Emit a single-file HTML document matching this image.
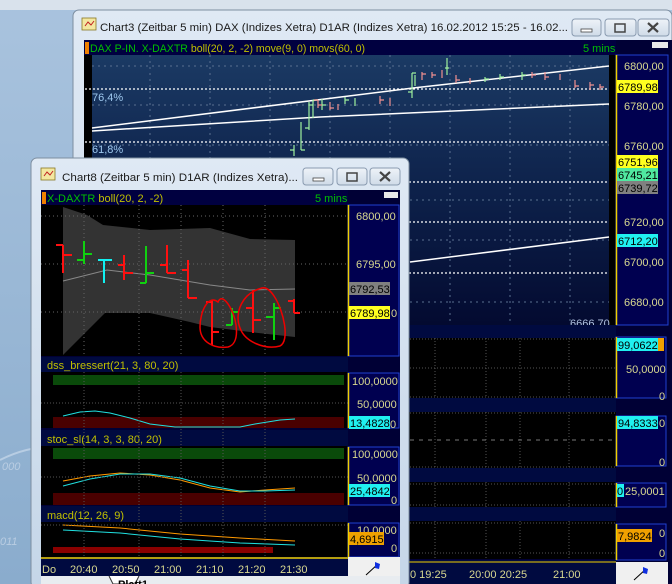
<!DOCTYPE html>
<html><head><meta charset="utf-8"><style>
html,body{margin:0;padding:0;width:672px;height:584px;overflow:hidden;background:#9db9d8}
svg{display:block}
text{font-family:"Liberation Sans",sans-serif;font-size:11px}
</style></head><body>
<svg width="672" height="584" viewBox="0 0 672 584" xmlns="http://www.w3.org/2000/svg">
<defs>
<linearGradient id="desk" x1="0" y1="0" x2="0" y2="1">
<stop offset="0" stop-color="#a9c3de"/><stop offset="1" stop-color="#8aaccd"/></linearGradient>
<linearGradient id="title" x1="0" y1="0" x2="0" y2="1">
<stop offset="0" stop-color="#dfe9f4"/><stop offset="1" stop-color="#c5d6e8"/></linearGradient>
<linearGradient id="plot3" x1="0" y1="0" x2="0" y2="1">
<stop offset="0" stop-color="#1b3a64"/><stop offset="0.55" stop-color="#0c1f48"/><stop offset="1" stop-color="#030a30"/></linearGradient>
<linearGradient id="btn" x1="0" y1="0" x2="0" y2="1">
<stop offset="0" stop-color="#eef3f8"/><stop offset="1" stop-color="#cfdbe8"/></linearGradient>
</defs>
<rect width="672" height="584" fill="url(#desk)"/>
<rect width="672" height="10" fill="#d9e2ec"/>
<path d="M0 460 Q40 440 80 450" stroke="#b8cde3" stroke-width="2" fill="none"/>
<text x="2" y="470" fill="#b9cde2" font-size="26" font-style="italic">000</text>
<text x="0" y="545" fill="#b9cde2" font-size="22" font-style="italic">011</text>

<!-- Chart3 window -->
<rect x="73" y="10" width="599" height="574" rx="6" fill="url(#title)" stroke="#7d8ea0"/>
<rect x="82" y="18" width="14" height="12" fill="#f3e7a0" stroke="#887722" stroke-width="0.8"/>
<path d="M85 26 l3 -4 3 3 3 -4" stroke="#c02020" fill="none"/>
<text x="100" y="31" fill="#1a1a1a" font-size="12" textLength="468" lengthAdjust="spacingAndGlyphs">Chart3 (Zeitbar 5 min)  DAX (Indizes Xetra) D1AR (Indizes Xetra) 16.02.2012 15:25 - 16.02...</text>
<g stroke="#8a9bb0" fill="url(#btn)">
<rect x="572" y="19" width="29" height="17" rx="3"/><rect x="605" y="19" width="31" height="17" rx="3"/><rect x="638" y="19" width="31" height="17" rx="3"/></g>
<rect x="581" y="29" width="11" height="3" fill="#fff" stroke="#444" stroke-width="0.8"/>
<rect x="615" y="24" width="10" height="8" fill="none" stroke="#444" stroke-width="1.5"/>
<path d="M648 23 l10 9 M658 23 l-10 9" stroke="#444" stroke-width="2.2"/>

<rect x="84" y="40" width="588" height="544" fill="#000035"/>
<rect x="84" y="40" width="532" height="15" fill="#000040"/>
<rect x="85" y="42" width="4" height="12" fill="#f08000"/>
<text x="90" y="52" textLength="275" lengthAdjust="spacingAndGlyphs"><tspan fill="#00c000">DAX P-IN. X-DAXTR </tspan><tspan fill="#c0c000">boll(20, 2, -2) move(9, 0) movs(60, 0)</tspan></text>
<text x="583" y="52" fill="#00c000">5 mins</text>
<rect x="652" y="42" width="16" height="6" fill="#e8e8e8"/>
<rect x="84" y="55" width="8" height="270" fill="#000"/>
<rect x="92" y="55" width="517" height="270" fill="url(#plot3)"/>
<rect x="609" y="55" width="7" height="270" fill="#000"/>
<g stroke="#5a7090" stroke-dasharray="2,4" stroke-width="1">
<path d="M150 55V325M210 55V325M270 55V325M330 55V325M390 55V325M450 55V325M510 55V325M570 55V325"/>
<path d="M92 66H609M92 105H609M92 145H609M92 200H609M92 240H609M92 302H609"/></g>
<g stroke="#fff" stroke-dasharray="2,2" stroke-width="1.2">
<path d="M85 89H609M85 142H609M85 182H609M85 222H609M85 273H609"/></g>
<text x="92" y="101" fill="#9ec8ee">76,4%</text>
<text x="92" y="153" fill="#9ec8ee">61,8%</text>
<path d="M92 128L413 88L609 66" stroke="#fff" stroke-width="1.5" fill="none"/>
<path d="M92 131L320 117L609 104" stroke="#fff" stroke-width="1.5" fill="none"/>
<path d="M410 262L609 237" stroke="#fff" stroke-width="1.5" fill="none"/>
<g stroke="#9ef09e" stroke-width="1.2" fill="none">
<path d="M294 145V156M301 122V150M309 102V130M313 100V118M322 99V110M345 97V104M355 98V106M412 73V98M415 75V86M447 58V75M485 77V82M500 74V80M522 72V80"/>
<path d="M290 150h4M301 150h4M305 128h4M309 105h4M313 100h4M322 105h4M345 100h4M408 92h4M412 73h4M445 68h4M485 79h4M500 77h4M522 75h4"/></g>
<g stroke="#f09090" stroke-width="1.2" fill="none">
<path d="M318 100v8M330 102v8M338 104v6M380 96v8M390 98v8M422 72v8M432 72v6M442 70v8M456 75v8M470 78v6M532 72v6M545 72v8M560 74v6M575 80v8M590 82v8M600 84v6"/>
<path d="M314 100h4M318 105h4M330 108h4M380 100h4M422 74h4M432 75h4M456 80h4M532 75h4M545 77h4M575 86h4M590 85h4M600 87h4"/></g>
<rect x="616" y="55" width="52" height="270" fill="#000050" stroke="#2040d0"/>
<path d="M616.5 55V325" stroke="#f0d000" stroke-width="1.5"/>
<g fill="#d8d890" font-size="11.5"><text x="624" y="70">6800,00</text><text x="624" y="110">6780,00</text><text x="624" y="150">6760,00</text><text x="624" y="226">6720,00</text><text x="624" y="266">6700,00</text><text x="624" y="306">6680,00</text></g>
<rect x="617" y="80" width="41" height="13" fill="#ffff20"/><text x="618" y="91" fill="#000">6789,98</text>
<rect x="617" y="155" width="41" height="13" fill="#ffff20"/><text x="618" y="166" fill="#000">6751,96</text>
<rect x="617" y="168" width="41" height="13" fill="#50e8a0"/><text x="618" y="179" fill="#000">6745,21</text>
<rect x="617" y="181" width="41" height="13" fill="#808080"/><text x="618" y="192" fill="#000">6739,72</text>
<rect x="617" y="234" width="41" height="13" fill="#20f0f0"/><text x="618" y="245" fill="#000">6712,20</text>
<text x="570" y="327" fill="#b0c0e0">6666,70</text>
<rect x="84" y="325" width="532" height="13" fill="#000a40"/>
<rect x="84" y="338" width="532" height="60" fill="#000"/>
<rect x="84" y="398" width="532" height="14" fill="#000a40"/>
<rect x="84" y="412" width="532" height="56" fill="#000"/>
<rect x="84" y="468" width="532" height="14" fill="#000a40"/>
<rect x="84" y="482" width="532" height="25" fill="#000"/>
<rect x="84" y="507" width="532" height="14" fill="#000a40"/>
<rect x="84" y="521" width="532" height="38" fill="#000"/>
<g stroke="#555" stroke-dasharray="1,2">
<path d="M435 338V398M486 338V398M520 338V398M569 338V398M435 412V468M486 412V468M520 412V468M569 412V468M435 482V507M486 482V507M569 482V507M435 521V559M486 521V559M520 521V559M569 521V559"/>
<path d="M410 339H616M410 368H616M410 397H616M410 413H616M410 467H616M410 484H616M410 505H616M410 523H616M410 553H616"/></g>
<path d="M410 440H616" stroke="#777" stroke-dasharray="4,5"/>
<g fill="#000050" stroke="#2040d0"><rect x="616" y="337" width="50" height="61"/><rect x="616" y="416" width="50" height="50"/><rect x="616" y="483" width="50" height="24"/><rect x="616" y="524" width="50" height="36"/></g>
<g stroke="#f0d000" stroke-width="1.5"><path d="M616.5 337V398M616.5 416V466M616.5 483V507M616.5 524V560"/></g>
<rect x="617" y="338" width="41" height="13" fill="#20f0f0"/><text x="618" y="349" fill="#000">99,0622</text><rect x="658" y="338" width="6" height="13" fill="#f0a000"/>
<text x="626" y="373" fill="#d8d890">50,0000</text><text x="659" y="400" fill="#d8d890">0</text>
<rect x="617" y="416" width="41" height="13" fill="#20f0f0"/><text x="618" y="427" fill="#000">94,8333</text><text x="659" y="427" fill="#d8d890">0</text>
<text x="659" y="466" fill="#d8d890">0</text>
<rect x="617" y="484" width="7" height="13" fill="#20f0f0"/><text x="617" y="495" fill="#000">0</text><text x="625" y="495" fill="#d8d890">25,0001</text>
<rect x="617" y="529" width="35" height="13" fill="#f0a000"/><text x="618" y="540" fill="#000">7,9824</text>
<text x="659" y="537" fill="#d8d890">0</text><text x="659" y="557" fill="#d8d890">0</text>
<rect x="84" y="560" width="532" height="24" fill="#000a40"/>
<path d="M84 562H616" stroke="#f0d000"/>
<g fill="#d8d890" font-size="13"><text x="410" y="578">0 19:25</text><text x="469" y="578">20:00 20:25</text><text x="553" y="578">21:00</text></g>
<rect x="616" y="562" width="52" height="22" fill="#f0f0f0"/>
<path d="M634 580L646 569" stroke="#000"/><path d="M643 567l5 2-1 5-4-1z" fill="#1030e0"/>

<!-- Chart8 window -->
<rect x="31" y="158" width="378" height="430" rx="6" fill="url(#title)" stroke="#7d8ea0"/>
<rect x="41" y="168" width="14" height="12" fill="#f3e7a0" stroke="#887722" stroke-width="0.8"/>
<path d="M44 176 l3 -4 3 3 3 -4" stroke="#c02020" fill="none"/>
<text x="62" y="181" fill="#1a1a1a" font-size="12" textLength="236" lengthAdjust="spacingAndGlyphs">Chart8 (Zeitbar 5 min)  D1AR (Indizes Xetra)...</text>
<g stroke="#8a9bb0" fill="url(#btn)">
<rect x="303" y="168" width="30" height="17" rx="3"/><rect x="337" y="168" width="30" height="17" rx="3"/><rect x="370" y="168" width="30" height="17" rx="3"/></g>
<rect x="313" y="178" width="11" height="3" fill="#fff" stroke="#444" stroke-width="0.8"/>
<rect x="347" y="173" width="10" height="8" fill="none" stroke="#444" stroke-width="1.5"/>
<path d="M380 172 l10 9 M390 172 l-10 9" stroke="#444" stroke-width="2.2"/>

<rect x="41" y="190" width="359" height="394" fill="#000035"/>
<rect x="41" y="190" width="307" height="15" fill="#000040"/>
<rect x="42" y="192" width="4" height="12" fill="#f08000"/>
<text x="47" y="202"><tspan fill="#00c000">X-DAXTR </tspan><tspan fill="#c0c000">boll(20, 2, -2)</tspan></text>
<text x="315" y="202" fill="#00c000">5 mins</text>
<rect x="384" y="192" width="14" height="6" fill="#e8e8e8"/>
<rect x="41" y="205" width="307" height="151" fill="#000"/>
<polygon points="63,207 87,215 103,225 150,230 210,228 250,239 295,240 295,337 250,332 210,327 190,322 150,313 105,313 63,355" fill="#333"/>
<polyline points="63,281 107,270 150,275 210,285 250,290 295,289" fill="none" stroke="#888"/>
<g stroke="#666" stroke-dasharray="1,3"><path d="M84 205V356M139 205V356M181 205V356M223 205V356M265 205V356M41 216H348M41 264H348M41 312H348"/></g>
<g stroke="#ff1010" stroke-width="2" fill="none">
<path d="M63 245V273M56 245H63M63 255H72"/>
<path d="M124 255V280M118 265H124M124 273H133"/>
<path d="M167 245V273M160 265H167M167 273H176"/>
<path d="M188 260V298M182 270H188M188 298H197"/>
<path d="M212 300V345M206 302H212M212 332H219"/>
<path d="M253 290V333M246 308H253M253 320H261"/>
<path d="M294 299V313M288 301H294M294 313H300"/></g>
<g stroke="#10d010" stroke-width="2" fill="none">
<path d="M84 241V264M77 260H84M84 254H92"/>
<path d="M146 246V283M140 283H146M146 273H154"/>
<path d="M232 308V325M226 325H232M232 312H238"/>
<path d="M274 303V340M266 317H274M274 308H281"/></g>
<path d="M104 260V283M98 260H112" stroke="#10f0f0" stroke-width="2" fill="none"/>
<path d="M218 302c-10-8-18 10-18 25 0 15 14 22 28 20 12-3 10-25 2-40-6-10-10-10-12-5z" stroke="#e00" stroke-width="1.5" fill="none"/>
<path d="M262 288c-20 5-28 25-22 40 5 14 25 22 40 18 10-5 4-35-6-50-4-6-8-9-12-8z" stroke="#e00" stroke-width="1.5" fill="none"/>
<rect x="348" y="205" width="51" height="151" fill="#000050" stroke="#2040d0"/>
<path d="M348.5 205V356" stroke="#f0d000" stroke-width="1.5"/>
<g font-size="11.5" fill="#d8d890"><text x="356" y="220">6800,00</text><text x="356" y="268">6795,00</text></g>
<rect x="349" y="282" width="41" height="13" fill="#808080"/><text x="350" y="293" fill="#000">6792,53</text>
<rect x="349" y="306" width="41" height="13" fill="#ffff20"/><text x="350" y="317" fill="#000">6789,98</text><text x="391" y="317" fill="#d8d890">0</text>
<rect x="41" y="357" width="307" height="15" fill="#000a40"/><text x="47" y="369" fill="#c0c000">dss_bressert(21, 3, 80, 20)</text>
<rect x="41" y="372" width="307" height="56" fill="#000"/>
<rect x="53" y="375" width="291" height="10" fill="#0a4a0a"/><rect x="53" y="417" width="291" height="11" fill="#4a0000"/>
<polyline points="63,416 80,412 95,411 110,413 130,418 150,424 175,427 200,427 240,427 255,424 280,420 295,419" fill="none" stroke="#20e0e0"/>
<rect x="41" y="430" width="307" height="16" fill="#000a40"/><text x="47" y="443" fill="#c0c000">stoc_sl(14, 3, 3, 80, 20)</text>
<rect x="41" y="446" width="307" height="59" fill="#000"/>
<rect x="53" y="448" width="291" height="11" fill="#0a4a0a"/><rect x="53" y="493" width="291" height="12" fill="#4a0000"/>
<polyline points="63,481 90,476 120,473 150,475 180,480 210,488 240,492 265,490 295,488" fill="none" stroke="#ff9900"/>
<polyline points="63,486 90,479 120,474 150,474 180,478 210,486 240,491 265,491 295,490" fill="none" stroke="#20e0e0"/>
<rect x="41" y="506" width="307" height="16" fill="#000a40"/><text x="47" y="519" fill="#c0c000">macd(12, 26, 9)</text>
<rect x="41" y="522" width="307" height="35" fill="#000"/>
<polyline points="63,525 120,528 180,534 240,538 295,541" fill="none" stroke="#ff9900"/>
<polyline points="63,530 120,533 180,539 240,543 295,545" fill="none" stroke="#20e0e0"/>
<rect x="53" y="547" width="220" height="6" fill="#8a0000"/>
<g stroke="#555" stroke-dasharray="1,2"><path d="M84 372V557M139 372V557M181 372V557M223 372V557M265 372V557M41 403H348M41 477H348M41 525H348"/></g>
<g fill="#000050" stroke="#2040d0"><rect x="348" y="373" width="51" height="55"/><rect x="348" y="447" width="51" height="58"/><rect x="348" y="523" width="51" height="34"/></g>
<g stroke="#f0d000" stroke-width="1.5"><path d="M348.5 373V428M348.5 447V505M348.5 523V557"/></g>
<g fill="#d8d890" font-size="11.5"><text x="352" y="385">100,0000</text><text x="357" y="408">50,0000</text><text x="390" y="428">0</text><text x="352" y="458">100,0000</text><text x="357" y="482">50,0000</text><text x="391" y="504">0</text><text x="357" y="534">10,0000</text><text x="391" y="552">0</text></g>
<rect x="349" y="416" width="41" height="13" fill="#20f0f0"/><text x="350" y="427" fill="#000">13,4828</text>
<rect x="349" y="484" width="41" height="13" fill="#20f0f0"/><text x="350" y="495" fill="#000">25,4842</text>
<rect x="349" y="532" width="35" height="13" fill="#f0a000"/><text x="350" y="543" fill="#000">4,6915</text>
<rect x="41" y="557" width="307" height="19" fill="#000a40"/>
<path d="M41 558H348" stroke="#f0d000" stroke-width="1.5"/>
<g fill="#d8d890" font-size="13"><text x="42" y="573">Do</text><text x="70" y="573">20:40</text><text x="112" y="573">20:50</text><text x="154" y="573">21:00</text><text x="196" y="573">21:10</text><text x="238" y="573">21:20</text><text x="280" y="573">21:30</text></g>
<rect x="348" y="557" width="52" height="19" fill="#f0f0f0"/>
<path d="M366 575L378 564" stroke="#000"/><path d="M375 562l5 2-1 5-4-1z" fill="#1030e0"/>
<rect x="41" y="576" width="359" height="8" fill="#e8ecf0"/>
<path d="M109 576l4 8h22l4-8" fill="#fff" stroke="#333"/>
<text x="118" y="588" fill="#000" font-weight="bold" font-size="12">Platt1</text>
</svg>
</body></html>
